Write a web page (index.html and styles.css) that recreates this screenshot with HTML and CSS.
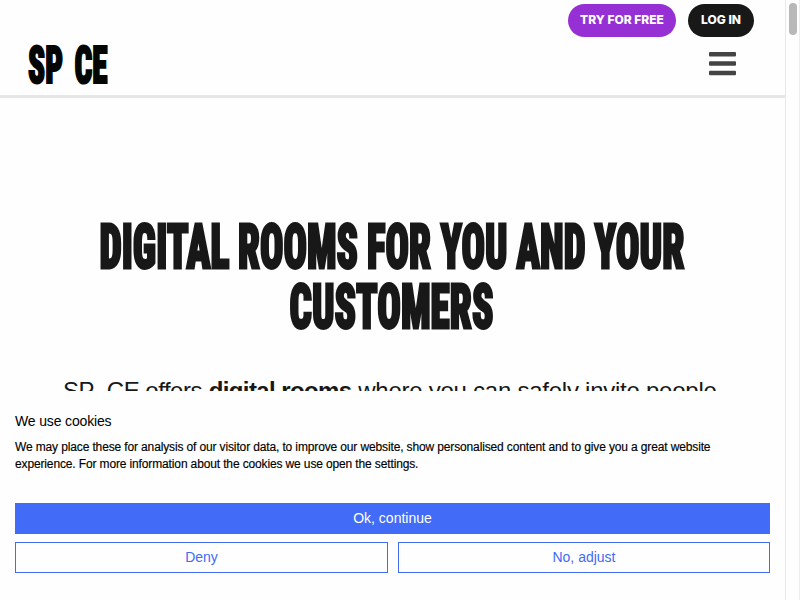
FILE: index.html
```html
<!DOCTYPE html>
<html lang="en">
<head>
<meta charset="utf-8">
<title>SP_CE</title>
<link rel="stylesheet" href="styles.css">
</head>
<body>
<div class="page">
  <header class="header">
    <nav class="actions">
      <a class="pill pill-try">TRY FOR FREE</a>
      <a class="pill pill-login">LOG IN</a>
    </nav>
    <div class="brand-row">
      <svg class="logo display" width="82" height="44" role="img" aria-label="SP CE">
        <text x="1" y="40.8" textLength="35" lengthAdjust="spacingAndGlyphs">SP</text>
        <text x="47.5" y="40.8" textLength="33" lengthAdjust="spacingAndGlyphs">CE</text>
      </svg>
      <svg class="menu" width="28" height="26" viewBox="0 0 28 26">
        <rect x="1" y="1" width="27" height="4.5" rx="1"/>
        <rect x="1" y="10.3" width="27" height="4.5" rx="1"/>
        <rect x="1" y="19.8" width="27" height="4.5" rx="1"/>
      </svg>
    </div>
  </header>
  <main class="hero">
    <h1 class="title">
      <svg class="display" width="600" height="120">
        <text x="6.5" y="50" textLength="130" lengthAdjust="spacingAndGlyphs">DIGITAL</text>
        <text x="145" y="50" textLength="120" lengthAdjust="spacingAndGlyphs">ROOMS</text>
        <text x="274" y="50" textLength="64" lengthAdjust="spacingAndGlyphs">FOR</text>
        <text x="347.5" y="50" textLength="67" lengthAdjust="spacingAndGlyphs">YOU</text>
        <text x="423.5" y="50" textLength="69" lengthAdjust="spacingAndGlyphs">AND</text>
        <text x="501.5" y="50" textLength="90" lengthAdjust="spacingAndGlyphs">YOUR</text>
        <text x="196.5" y="110" textLength="204" lengthAdjust="spacingAndGlyphs">CUSTOMERS</text>
      </svg>
    </h1>
    <p class="lead"><span class="lead-a">SP_CE offers</span> <b>digital rooms</b> <span class="lead-b">where you can safely invite people</span></p>
  </main>
  <section class="cookies">
    <h2>We use cookies</h2>
    <p>We may place these for analysis of our visitor data, to improve our website, show personalised content and to give you a great website<br>experience. For more information about the cookies we use open the settings.</p>
    <div class="buttons">
      <button class="btn primary">Ok, continue</button>
      <button class="btn">Deny</button>
      <button class="btn">No, adjust</button>
    </div>
  </section>
</div>
<div class="scrollbar"><div class="thumb"></div></div>
</body>
</html>
```
FILE: styles.css
```css
* { box-sizing: border-box; }
body {
  margin: 0;
  width: 800px;
  height: 600px;
  overflow: hidden;
  display: flex;
  background: #fefefe;
  color: #181818;
  font-family: "Liberation Sans", Arial, sans-serif;
}
.page {
  width: 785px;
  height: 600px;
  display: flex;
  flex-direction: column;
}
.header {
  height: 98px;
  flex: none;
  border-bottom: 3px solid #e6e6e6;
}
.actions {
  display: flex;
  justify-content: flex-end;
  gap: 12px;
  padding: 4px 31px 0 0;
}
.pill {
  height: 33px;
  border-radius: 17px;
  color: #fff;
  font: 800 12px/32px Inter, sans-serif;
  text-align: center;
  white-space: nowrap;
}
.pill-try { width: 108px; background: #962fd4; }
.pill-login { width: 66px; background: #181818; }
.brand-row {
  display: flex;
  justify-content: space-between;
  padding: 5px 49px 0 27px;
}
.display {
  display: block;
  font-family: Roboto, sans-serif;
  font-weight: 900;
  font-stretch: 75%;
  fill: #181818;
  stroke: #181818;
  overflow: visible;
}
.logo { font-size: 52px; fill: #040606; stroke: #040606; stroke-width: 2.2px; }
.menu { fill: #434446; margin-top: 9px; }
.hero { flex: none; height: 293px; overflow: hidden; }
.title {
  margin: 120px 0 0 93px;
  font-size: 61px;
  stroke-width: 2.8px;
  height: 120px;
}
.lead {
  margin: 38px 0 0 63px;
  font-size: 24px;
  line-height: 30px;
  white-space: nowrap;
}
.lead-a { letter-spacing: -0.5px; }
.lead b { letter-spacing: -0.6px; }
.lead-b { letter-spacing: -0.25px; }
.cookies {
  flex: 1;
  padding: 21px 15px 0;
  color: #000;
}
.cookies h2 { margin: 0; font-size: 14px; line-height: 18px; font-weight: 400; letter-spacing: -0.15px; }
.cookies p { margin: 9px 0 0; font-size: 12px; line-height: 17px; white-space: nowrap; letter-spacing: -0.135px; -webkit-text-stroke: 0.15px #000; }
.buttons {
  margin-top: 30px;
  display: grid;
  grid-template-columns: 373px 372px;
  gap: 8px 10px;
}
.btn {
  height: 31px;
  padding: 0 0 2px;
  border: 1px solid #426bf8;
  background: #fefefe;
  color: #426bf8;
  font: 14px "Liberation Sans", sans-serif;
}
.btn.primary { grid-column: 1 / 3; background: #426bf8; color: #fff; }
.scrollbar {
  width: 15px;
  height: 600px;
  border-left: 1px solid #e8e8e8;
  border-right: 1px solid #ededed;
  padding: 3px 2px 0 3px;
}
.thumb { width: 8px; height: 32px; border-radius: 4px; background: #b8b8b8; }
```
